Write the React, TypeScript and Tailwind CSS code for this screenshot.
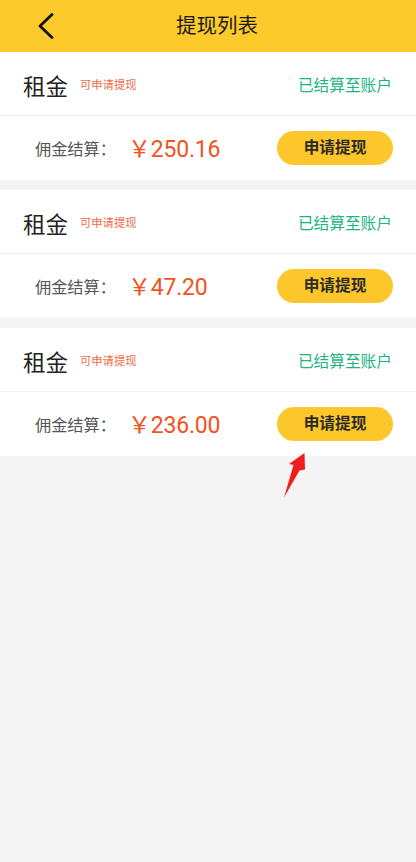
import React from 'react';

const items = ['250.16', '47.20', '236.00'];

const App: React.FC = () => {
  return (
    <div
      className="relative min-h-[862px] w-full bg-[#f4f4f4]"
      style={{ fontFamily: "Roboto, 'Noto Sans CJK SC', sans-serif" }}
    >
      {/* Header */}
      <div className="flex h-[52px] items-center bg-[#fdca2b]">
        <div className="flex w-[78px] items-center pl-[38px]">
          <svg width="16" height="26" viewBox="0 0 16 26" fill="none">
            <path d="M14 1.5 L2 13 L14 24.5" stroke="#111" strokeWidth="2.8" strokeLinecap="round" strokeLinejoin="round" />
          </svg>
        </div>
        <div className="flex-1 text-center text-[20.5px] text-[#1a1a1a]">提现列表</div>
        <div className="w-[60px]" />
      </div>

      {/* List */}
      <div className="flex flex-col gap-[10px]">
        {items.map((amt, i) => (
          <div key={i} className="bg-white">
            <div className="flex h-[64px] items-center border-b border-[#f0f0f0] pl-[23px] pr-[24px]">
              <span className="mt-[8px] text-[22.5px] text-[#222]">租金</span>
              <span className="ml-[12px] mt-[5px] text-[11.3px] text-[#ef6a44]">可申请提现</span>
              <span className="ml-auto mt-[4px] text-[15.7px] text-[#1cb57f]">已结算至账户</span>
            </div>
            <div className="flex h-[64px] items-center pl-[35px] pr-[23px]">
              <span className="mt-[5px] text-[16.2px] text-[#555]">佣金结算：</span>
              <span className="ml-[12px] mt-[4px] text-[23px] tracking-[-0.2px] text-[#f4511e]">￥{amt}</span>
              <button className="ml-auto flex h-[34px] w-[116px] items-center justify-center rounded-full bg-[#fdc62a] text-[15.7px] font-bold text-[#2a2a2a]">
                申请提现
              </button>
            </div>
          </div>
        ))}
      </div>

      {/* Annotation arrow */}
      <svg className="absolute left-0 top-0" width="416" height="862" viewBox="0 0 416 862">
        <polygon points="304.5,453 305,469.5 299.5,470.5 284,497.5 293.5,465 289,464" fill="#f21c1c" />
      </svg>
    </div>
  );
};

export default App;
